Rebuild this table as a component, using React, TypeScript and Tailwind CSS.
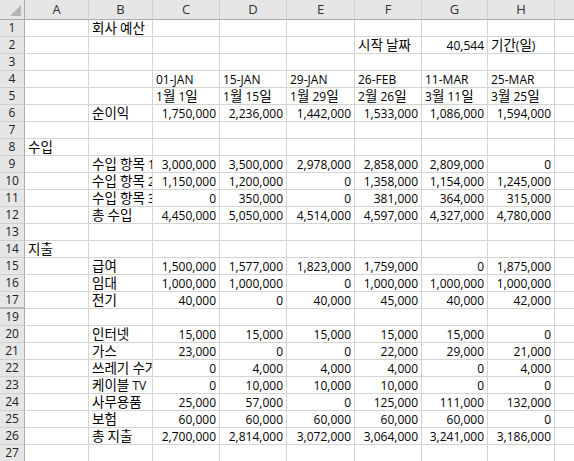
import React from "react";

const COL_W = [
  "w-[64px]",
  "w-[64px]",
  "w-[67px]",
  "w-[67px]",
  "w-[68px]",
  "w-[67px]",
  "w-[66px]",
  "w-[67px]",
];
const LETTERS = ["A", "B", "C", "D", "E", "F", "G", "H"];

type Row = { n: number; cells: string[] };

const row = (n: number, a = "", b = "", rest: string[] = []): Row => ({
  n,
  cells: [a, b, ...rest, "", "", "", "", "", ""].slice(0, 8),
});

const ROWS: Row[] = [
  row(1, "", "회사 예산"),
  row(2, "", "", ["", "", "", "시작 날짜", "40,544", "기간(일)"]),
  row(3),
  row(4, "", "", ["01-JAN", "15-JAN", "29-JAN", "26-FEB", "11-MAR", "25-MAR"]),
  row(5, "", "", ["1월 1일", "1월 15일", "1월 29일", "2월 26일", "3월 11일", "3월 25일"]),
  row(6, "", "순이익", ["1,750,000", "2,236,000", "1,442,000", "1,533,000", "1,086,000", "1,594,000"]),
  row(7),
  row(8, "수입"),
  row(9, "", "수입 항목 1", ["3,000,000", "3,500,000", "2,978,000", "2,858,000", "2,809,000", "0"]),
  row(10, "", "수입 항목 2", ["1,150,000", "1,200,000", "0", "1,358,000", "1,154,000", "1,245,000"]),
  row(11, "", "수입 항목 3", ["0", "350,000", "0", "381,000", "364,000", "315,000"]),
  row(12, "", "총 수입", ["4,450,000", "5,050,000", "4,514,000", "4,597,000", "4,327,000", "4,780,000"]),
  row(13),
  row(14, "지출"),
  row(15, "", "급여", ["1,500,000", "1,577,000", "1,823,000", "1,759,000", "0", "1,875,000"]),
  row(16, "", "임대", ["1,000,000", "1,000,000", "0", "1,000,000", "1,000,000", "1,000,000"]),
  row(17, "", "전기", ["40,000", "0", "40,000", "45,000", "40,000", "42,000"]),
  row(19),
  row(20, "", "인터넷", ["15,000", "15,000", "15,000", "15,000", "15,000", "0"]),
  row(21, "", "가스", ["23,000", "0", "0", "22,000", "29,000", "21,000"]),
  row(22, "", "쓰레기 수거", ["0", "4,000", "4,000", "4,000", "0", "4,000"]),
  row(23, "", "케이블 TV", ["0", "10,000", "10,000", "10,000", "0", "0"]),
  row(24, "", "사무용품", ["25,000", "57,000", "0", "125,000", "111,000", "132,000"]),
  row(25, "", "보험", ["60,000", "60,000", "60,000", "60,000", "60,000", "0"]),
  row(26, "", "총 지출", ["2,700,000", "2,814,000", "3,072,000", "3,064,000", "3,241,000", "3,186,000"]),
  row(27),
];

const isNum = (s: string) => /^[\d,]+$/.test(s);

// Hangul runs render a touch larger, like Malgun Gothic next to its Latin glyphs
function CellText({ text }: { text: string }) {
  const parts = text.split(/([\uac00-\ud7af]+)/).filter(Boolean);
  return (
    <span className="whitespace-pre">
      {parts.map((p, i) =>
        /[\uac00-\ud7af]/.test(p) ? (
          <span key={i} className="text-[13.5px]">
            {p}
          </span>
        ) : (
          <span key={i}>{p}</span>
        ),
      )}
    </span>
  );
}

export default function App() {
  return (
    <div
      className="h-[461px] w-[574px] overflow-hidden bg-white text-[12px] text-black"
      style={{ fontFamily: '"Open Sans", "Noto Sans CJK KR", sans-serif' }}
    >
      <HeaderRow />
      {ROWS.map((r) => (
        <div key={r.n} className="flex h-[17px]">
          <div
            className={
              "flex w-[25px] shrink-0 items-center justify-center border-r border-[#ababab] bg-[#e6e6e6] leading-none text-[#222] " +
              (r.n === 17 ? "border-b-2 border-b-[#b8b8b8]" : "border-b border-b-[#d0d0d0]")
            }
          >
            {r.n}
          </div>
          {r.cells.map((c, i) => (
            <div
              key={i}
              className={
                "flex h-[17px] shrink-0 items-center overflow-hidden whitespace-nowrap border-r border-b border-[#d4d4d4] px-[3px] pt-[1px] leading-none " +
                COL_W[i] +
                (isNum(c) ? " justify-end" : " justify-start")
              }
            >
              <CellText text={c} />
            </div>
          ))}
          <div className="h-[17px] flex-1 border-b border-[#d4d4d4]" />
        </div>
      ))}
    </div>
  );
}

function HeaderRow() {
  return (
    <div className="flex h-[20px] bg-[#e6e6e6] text-[13px] text-[#333]">
      <div className="relative w-[25px] shrink-0 border-r border-b border-[#ababab]">
        <svg className="absolute bottom-[3px] right-[3px]" width="11" height="11" viewBox="0 0 11 11">
          <polygon points="11,0 11,11 0,11" fill="#b5b5b5" />
        </svg>
      </div>
      {LETTERS.map((l, i) => (
        <div
          key={l}
          className={
            "flex shrink-0 items-center justify-center border-r border-r-[#d0d0d0] border-b border-b-[#ababab] " +
            COL_W[i]
          }
        >
          {l}
        </div>
      ))}
      <div className="flex-1 border-b border-[#ababab]" />
    </div>
  );
}
